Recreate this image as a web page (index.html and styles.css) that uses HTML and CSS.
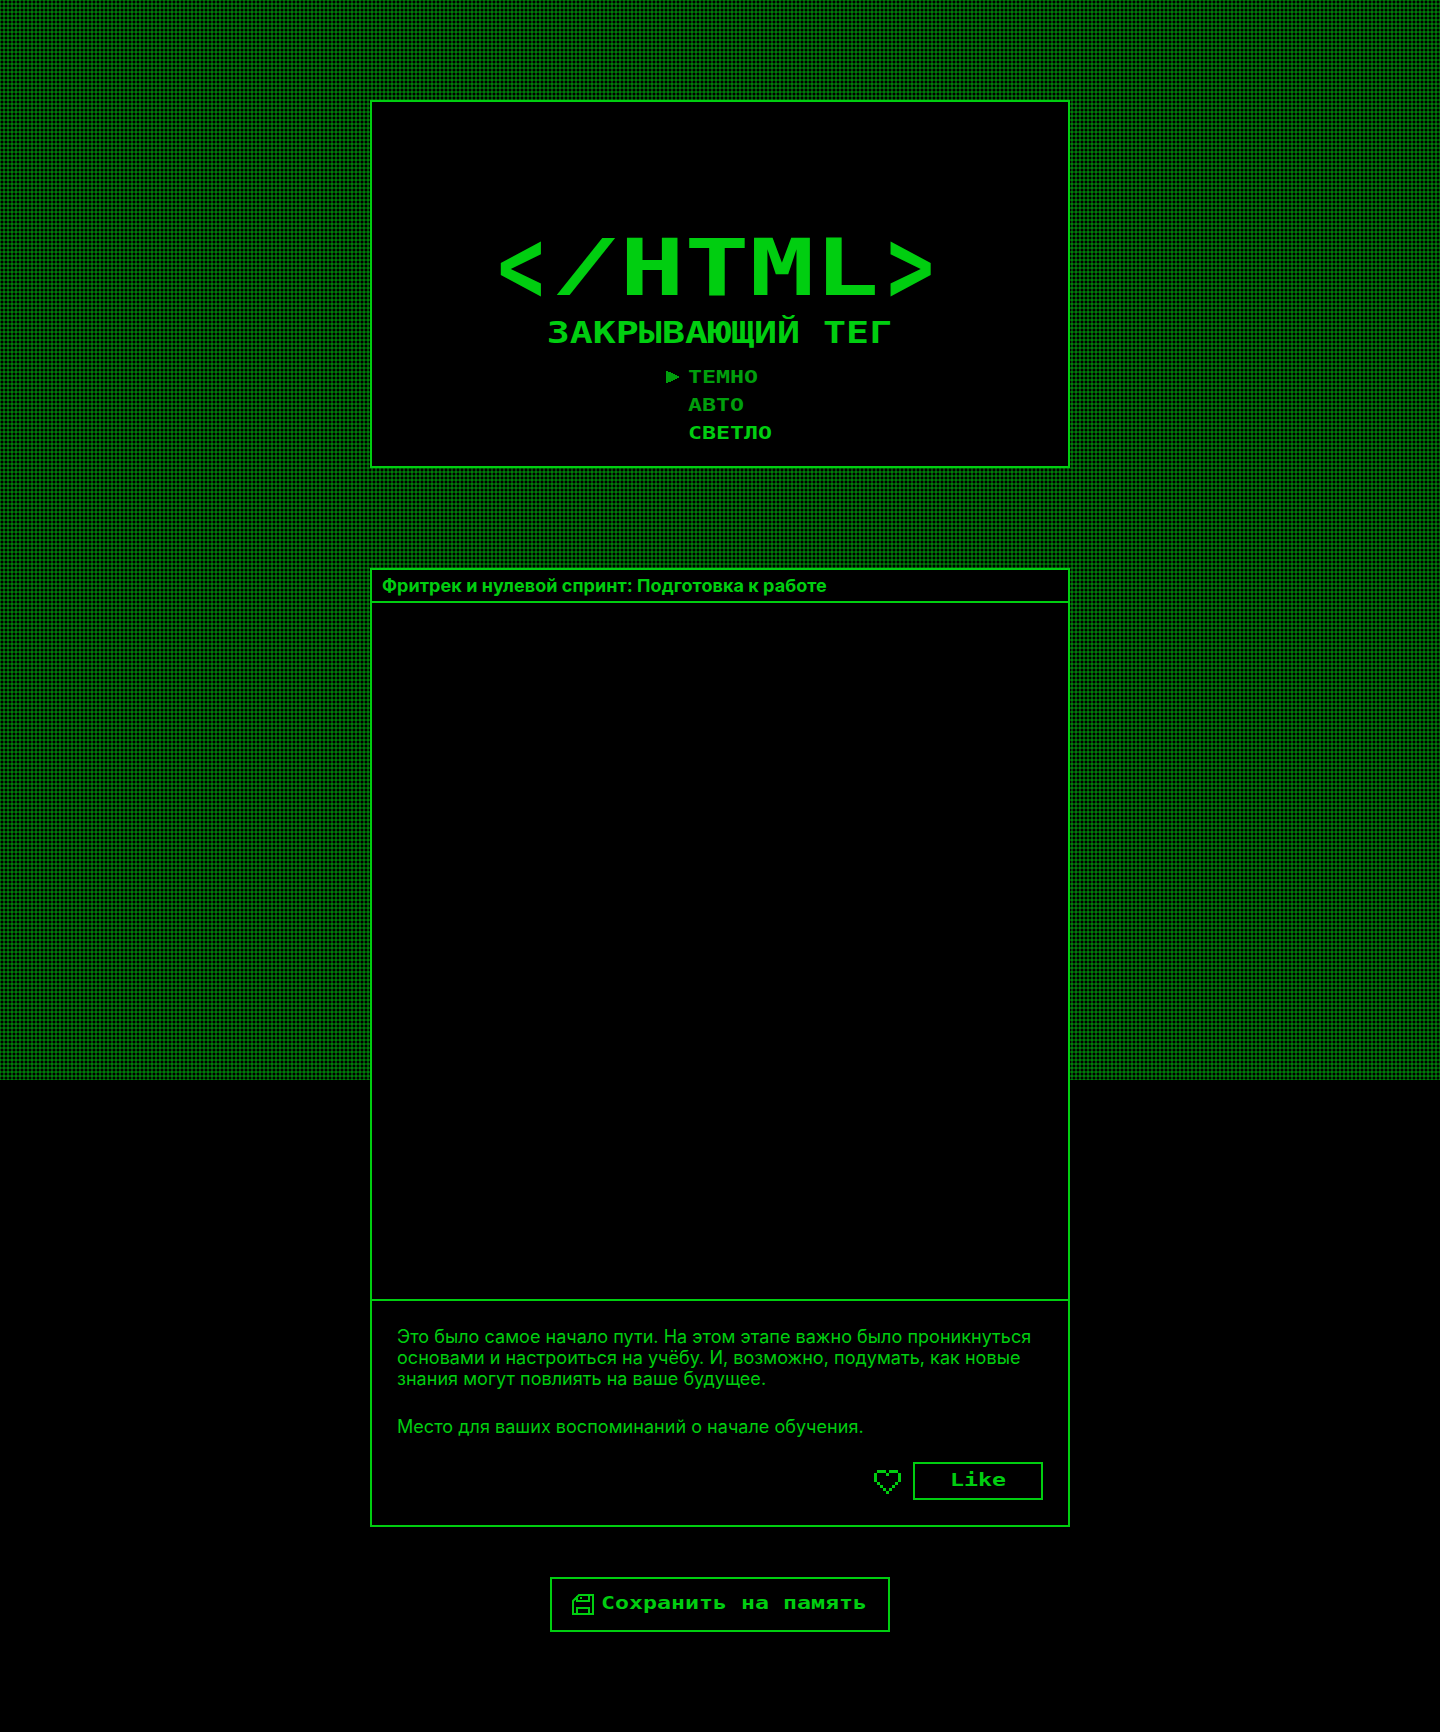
FILE: index.html
```html
<!DOCTYPE html>
<html lang="ru">
<head>
<meta charset="utf-8">
<title>Закрывающий тег</title>
<link rel="stylesheet" href="styles.css">
</head>
<body>
<div class="page">
  <header class="header">
    <h1 class="logo"><span class="logo-text"><span class="bracket">&lt;</span><span class="slash">/</span><span class="tag-name">HTML</span><span class="bracket">&gt;</span></span></h1>
    <p class="subtitle"><span class="subtitle-text">ЗАКРЫВАЮЩИЙ ТЕГ</span></p>
    <ul class="themes">
      <li class="theme theme-dim"><svg class="marker" viewBox="0 0 13 12"><path d="M0 0h2v1h3v1h2v1h2v1h2v1h2v2h-2v1h-2v1h-2v1h-2v1h-3v1h-2z"/></svg><button class="theme-button"><span class="pixel">ТЕМНО</span></button></li>
      <li class="theme theme-dim"><button class="theme-button"><span class="pixel">АВТО</span></button></li>
      <li class="theme"><button class="theme-button"><span class="pixel">СВЕТЛО</span></button></li>
    </ul>
  </header>
  <main class="content">
    <article class="card">
      <h2 class="card-title">Фритрек и нулевой спринт: Подготовка к работе</h2>
      <div class="card-image"></div>
      <div class="card-body">
        <p class="card-text">Это было самое начало пути. На этом этапе важно было проникнуться основами и настроиться на учёбу. И, возможно, подумать, как новые знания могут повлиять на ваше будущее.</p>
        <p class="card-text">Место для ваших воспоминаний о начале обучения.</p>
        <div class="like">
          <svg class="heart" viewBox="0 0 9 8" shape-rendering="crispEdges"><path d="M1 0h3v1H1zM5 0h3v1H5zM0 1h1v3H0zM4 1h1v1H4zM8 1h1v3H8zM1 4h1v1H1zM7 4h1v1H7zM2 5h1v1H2zM6 5h1v1H6zM3 6h1v1H3zM5 6h1v1H5zM4 7h1v1H4z"/></svg>
          <button class="like-button"><span class="pixel pixel-center">Like</span></button>
        </div>
      </div>
    </article>
    <button class="save-button">
      <svg class="floppy" viewBox="0 0 22 21"><path d="M7 1H21V20H1V7ZM5 2V7H17V1M5 20V14H17V20M8 4h2"/></svg>
      <span class="pixel">Сохранить на память</span>
    </button>
  </main>
</div>
</body>
</html>
```
FILE: styles.css
```css
* { box-sizing: border-box; }
body {
  --green: #00ce10;
  margin: 0;
  background: #000;
  color: var(--green);
  font: 18px/21px Inter, sans-serif;
  letter-spacing: .035px;
}
h1, h2, p, ul { margin: 0; padding: 0; }
ul { list-style: none; }
button { background: none; color: inherit; padding: 0; border: 0; }
.page {
  height: 1732px;
  padding-top: 100px;
  position: relative;
  display: flex;
  flex-direction: column;
  align-items: center;
  gap: 100px;
}
/* woven grid that fills the first screen */
.page::before {
  content: "";
  position: absolute;
  inset: 0 0 auto;
  height: 1080px;
  z-index: -1;
  background-image:
    linear-gradient(to right, rgba(0, 206, 16, .36) 50%, transparent 50%),
    linear-gradient(rgba(0, 206, 16, .36) 50%, transparent 50%);
  background-size: 4px 4px;
  background-position: -1px -1px;
}
.header {
  width: 700px;
  height: 368px;
  border: 2px solid var(--green);
  background: #000;
  padding-top: 127px;
  display: flex;
  flex-direction: column;
  align-items: center;
}
.logo, .subtitle, .pixel {
  font-family: "DejaVu Sans Mono", monospace;
  font-weight: bold;
  letter-spacing: 0;
  white-space: nowrap;
}
.logo { font-size: 78px; line-height: 78px; }
.logo-text { display: block; transform: translateX(-2px) scaleX(1.382); }
.bracket { display: inline-block; transform: translate(-2px, -2px) scale(.72, 1.35); }
.slash { display: inline-block; transform: translate(-2px, -3px) scale(1.1, .9); }
.tag-name { display: inline-block; transform: translateX(-1px); }
.subtitle { font-size: 30px; line-height: 30px; margin-top: 11px; }
.subtitle-text { display: block; transform: translateX(-1px) scaleX(1.275); }
.themes { width: 64px; margin-top: 15px; }
.theme { height: 28px; display: flex; align-items: center; position: relative; }
.theme-dim { opacity: .77; }
.marker { position: absolute; left: -22px; top: 8px; width: 13px; height: 12px; fill: var(--green); }
.pixel {
  display: block;
  font-size: 18px;
  line-height: 20px;
  transform: scaleX(1.292);
  transform-origin: left;
}
.pixel-center { transform-origin: center; }
.card { width: 700px; border: 2px solid var(--green); background: #000; }
.card-title { height: 33px; padding: 5px 10px; font-size: 18px; letter-spacing: .05px; border-bottom: 2px solid var(--green); }
.card-image { height: 696px; }
.card-body { border-top: 2px solid var(--green); padding: 25px; }
.card-text + .card-text { margin-top: 27px; }
.like { margin-top: 25px; display: flex; justify-content: flex-end; gap: 12px; }
.heart { width: 27px; height: 24px; margin-top: 8px; fill: var(--green); }
.like-button { width: 130px; height: 38px; border: 2px solid var(--green); padding-bottom: 2px; }
.content { display: flex; flex-direction: column; align-items: center; gap: 50px; }
.save-button { width: 340px; height: 55px; border: 2px solid var(--green); display: flex; align-items: center; padding-left: 20px; gap: 7px; }
.save-button .pixel { margin-bottom: 4px; }
.floppy { width: 22px; height: 21px; fill: none; stroke: var(--green); stroke-width: 2; }
```
